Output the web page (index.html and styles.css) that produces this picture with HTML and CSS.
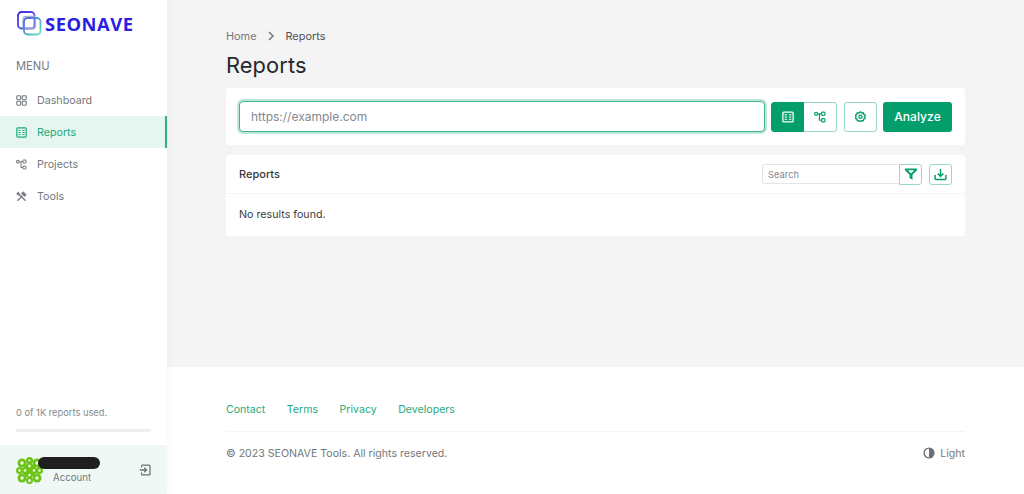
FILE: index.html
```html
<!DOCTYPE html>
<html lang="en">
<head>
<meta charset="utf-8">
<title>Reports - SEONAVE</title>
<link rel="stylesheet" href="styles.css">
</head>
<body>
<div class="app">
  <aside class="sidebar">
    <div class="logo">
      <svg class="logo-mark" width="25" height="25" viewBox="0 0 25 25" fill="none">
        <defs>
          <linearGradient id="lg1" x1="0" y1="0" x2="1" y2="1"><stop offset="0" stop-color="#3a22e6"/><stop offset="1" stop-color="#6f7ce8"/></linearGradient>
          <linearGradient id="lg2" x1="0" y1="0" x2="1" y2="1"><stop offset="0" stop-color="#4a5fe6"/><stop offset="1" stop-color="#63e6bd"/></linearGradient>
        </defs>
        <rect x="1" y="1" width="16.500" height="16.500" rx="3.500" stroke="url(#lg1)" stroke-width="1.800"/>
        <rect x="6" y="5.500" width="12.500" height="12.500" rx="3" stroke="#a9add0" stroke-width="1.300"/>
        <rect x="7" y="7" width="16.500" height="16.500" rx="3.500" stroke="url(#lg2)" stroke-width="1.800"/>
      </svg>
      <span class="logo-text">SEONAVE</span>
    </div>
    <div class="menu-title">MENU</div>
    <nav class="menu">
      <a class="menu-item">
        <svg class="mi" viewBox="0 0 14 14" fill="none" stroke="currentColor" stroke-width="1.400"><rect x="1" y="1" width="5" height="5" rx="1.200"/><rect x="8" y="1" width="5" height="5" rx="1.200"/><rect x="1" y="8" width="5" height="5" rx="1.200"/><rect x="8" y="8" width="5" height="5" rx="1.200"/></svg>
        Dashboard
      </a>
      <a class="menu-item active">
        <svg class="mi" viewBox="0 0 14 14" fill="none" stroke="currentColor" stroke-width="1.500"><rect x="1" y="1.200" width="12" height="11.600" rx="1.200"/><path d="M3 4.400h3M3 7h3M3 9.600h3M8 4.400h3M8 7h3M8 9.600h3" stroke-width="1.200"/></svg>
        Reports
      </a>
      <a class="menu-item">
        <svg class="mi" viewBox="0 0 14 14" fill="none" stroke="currentColor" stroke-width="1.300"><circle cx="2.400" cy="3.400" r="1.700"/><rect x="8.800" y="1.200" width="4" height="3.800" rx="1.200"/><rect x="8.800" y="9" width="4" height="3.800" rx="1.500"/><path d="M4.100 3.400h4.700M6.400 3.400v7.400h2.400"/></svg>
        Projects
      </a>
      <a class="menu-item">
        <svg class="mi" viewBox="0 0 14 14" fill="none" stroke="currentColor" stroke-width="1.600"><path d="M1.800 12.400l6.400-6.400"/><path d="M6.800 3l2.400-2 4 3.800-2.200 2.200z" fill="currentColor" stroke-width=".8"/><path d="M12.300 12.400L4.800 5"/><path d="M.8 3.100a3 3 0 0 0 4.200 2.200l-.5-2L2.900 1.300z" fill="currentColor" stroke-width=".6"/></svg>
        Tools
      </a>
    </nav>
    <div class="usage">
      <div class="usage-text">0 of 1K reports used.</div>
      <div class="usage-bar"></div>
    </div>
    <div class="account">
      <svg class="avatar" width="27" height="27" viewBox="0 0 27 27">
        <g fill="#6cc417">
          <circle cx="13.500" cy="3.500" r="3.500"/><circle cx="13.500" cy="23.500" r="3.500"/><circle cx="3.500" cy="13.500" r="3.500"/><circle cx="23.500" cy="13.500" r="3.500"/>
          <circle cx="6" cy="6" r="4.500"/><circle cx="21" cy="6" r="4.500"/><circle cx="6" cy="21" r="4.500"/><circle cx="21" cy="21" r="4.500"/>
          <rect x="7" y="7" width="13" height="13" transform="rotate(45 13.500 13.500)"/>
        </g>
        <g fill="#f1f9e8">
          <circle cx="6" cy="6" r="1.700"/><circle cx="21" cy="6" r="1.700"/><circle cx="6" cy="21" r="1.700"/><circle cx="21" cy="21" r="1.700"/>
          <circle cx="13.500" cy="3.500" r="1.100"/><circle cx="13.500" cy="23.500" r="1.500"/><circle cx="3.500" cy="13.500" r="1.200"/><circle cx="23.500" cy="13.500" r="1.200"/>
          <circle cx="9" cy="13.500" r="1.300"/><circle cx="18" cy="13.500" r="1.300"/><circle cx="13.500" cy="9" r="1.300"/><circle cx="13.500" cy="18" r="1.300"/>
        </g>
      </svg>
      <div class="account-info">
        <div class="redacted"></div>
        <div class="account-label">Account</div>
      </div>
      <svg class="logout" width="12" height="12" viewBox="0 0 14 14" fill="none" stroke="#6b7075" stroke-width="1.500"><path d="M3 4V2.200a1 1 0 0 1 1-1h7.800a1 1 0 0 1 1 1v9.600a1 1 0 0 1-1 1H4a1 1 0 0 1-1-1V10"/><path d="M.8 7h7.700M6.200 4.400L8.800 7l-2.600 2.600"/></svg>
    </div>
  </aside>
  <div class="main">
    <main class="content">
      <div class="breadcrumb">
        <span class="crumb">Home</span>
        <svg class="crumb-sep" width="8" height="10" viewBox="0 0 8 10" fill="none" stroke="#6c7075" stroke-width="1.400"><path d="M2 1l4 4-4 4"/></svg>
        <span class="crumb-current">Reports</span>
      </div>
      <h1 class="title">Reports</h1>
      <section class="card analyze">
        <input class="url" type="text" placeholder="https://example.com">
        <div class="btn-group">
          <button class="icon-btn selected" type="button">
            <svg width="12" height="12" viewBox="0 0 14 14" fill="none" stroke="currentColor" stroke-width="1.500"><rect x="1" y="1.200" width="12" height="11.600" rx="1.200"/><path d="M3 4.400h3M3 7h3M3 9.600h3M8 4.400h3M8 7h3M8 9.600h3" stroke-width="1.200"/></svg>
          </button>
          <button class="icon-btn" type="button">
            <svg width="12" height="12" viewBox="0 0 14 14" fill="none" stroke="currentColor" stroke-width="1.400"><circle cx="2.400" cy="3.400" r="1.700"/><rect x="8.800" y="1.200" width="4" height="3.800" rx="1.200"/><rect x="8.800" y="9" width="4" height="3.800" rx="1.500"/><path d="M4.100 3.400h4.700M6.400 3.400v7.400h2.400"/></svg>
          </button>
        </div>
        <button class="icon-btn solo" type="button">
          <svg width="11" height="11" viewBox="0 0 14 14" fill="none" stroke="currentColor" stroke-width="1.700"><path d="M7 1l1.500 1.600 2.200-.3.500 2.100 2 1-1 2 .8 2-2 .9-.5 2.200-2.300-.2L7 13.800l-1.700-1.500-2.300.2-.5-2.200-2-.9.800-2-1-2 2-1 .5-2.100 2.200.3z"/><circle cx="7" cy="7.300" r="2"/></svg>
        </button>
        <button class="analyze-btn" type="button">Analyze</button>
      </section>
      <section class="card results">
        <div class="results-head">
          <div class="results-title">Reports</div>
          <div class="tools">
            <input class="search" type="text" placeholder="Search">
            <button class="tool-btn joined" type="button">
              <svg width="12" height="12" viewBox="0 0 12 12" fill="#049e6c"><path d="M0 .5h12v1.700L7.500 6.800v5L4.500 10V6.800L0 2.200zM2.800 2.200L6 5.400l3.200-3.200z" fill-rule="evenodd"/></svg>
            </button>
            <button class="tool-btn" type="button">
              <svg width="13" height="13" viewBox="0 0 14 14" fill="none" stroke="#049e6c" stroke-width="1.600"><path d="M1.200 7.500v3.800a1 1 0 0 0 1 1h9.600a1 1 0 0 0 1-1V7.500"/><path d="M7 1v7.500M4 6l3 3 3-3"/></svg>
            </button>
          </div>
        </div>
        <div class="results-body">No results found.</div>
      </section>
    </main>
    <footer class="footer">
      <nav class="footer-links">
        <a>Contact</a><a>Terms</a><a>Privacy</a><a>Developers</a>
      </nav>
      <div class="footer-bottom">
        <span class="copy">© 2023 SEONAVE Tools. All rights reserved.</span>
        <span class="theme">
          <svg width="12" height="12" viewBox="0 0 12 12"><circle cx="6" cy="6" r="4.900" fill="none" stroke="#6c7075" stroke-width="1.400"/><path d="M6 1a5 5 0 0 1 0 10z" fill="#6c7075"/></svg>
          Light
        </span>
      </div>
    </footer>
  </div>
</div>
</body>
</html>
```
FILE: styles.css
```css
* { box-sizing: border-box; }
html, body { margin: 0; height: 100%; }
body { font-family: Inter, "Liberation Sans", sans-serif; background: #fff; color: #24282c; overflow: hidden; }
.app { display: flex; height: 494px; }

.sidebar { width: 167px; flex: none; display: flex; flex-direction: column; background: #fff; position: relative; z-index: 1; box-shadow: 0 0 10px rgba(0,0,0,.05); }
.logo { display: flex; align-items: center; height: 46px; padding: 0 0 0 17px; }
.logo-mark { flex: none; }
.logo-text { font-family: "Open Sans", sans-serif; font-weight: 700; font-size: 18.400px; color: #2a1fe0; letter-spacing: .5px; margin-left: 3px; }
.menu-title { font-size: 11.200px; color: #767a7f; padding: 13px 16px 0; height: 38px; }
.menu { display: flex; flex-direction: column; }
.menu-item { display: flex; align-items: center; gap: 10px; height: 32px; padding-left: 16px; font-size: 10.700px; color: #74787d; border-right: 2px solid transparent; }
.menu-item.active { background: #e5f5ef; color: #1fa97c; border-right-color: #2fae85; }
.mi { width: 11px; height: 11px; flex: none; }
.usage { margin-top: auto; padding: 0 16px; height: 39px; }
.usage-text { font-size: 9.300px; color: #85898e; line-height: 14px; }
.usage-bar { height: 3px; border-radius: 2px; background: #eeeeee; margin-top: 9px; }
.account { display: flex; align-items: center; height: 49px; padding: 0 16px; background: #eff8f5; }
.avatar { flex: none; margin-top: 2px; }
.account-info { flex: 1; display: flex; flex-direction: column; align-items: flex-start; padding-top: 2px; }
.redacted { width: 62px; height: 12px; border-radius: 6px; background: #1f1f1f; margin-left: -5px; }
.account-label { font-size: 9.700px; color: #74787d; margin: 3px 0 0 10px; line-height: 12px; }
.logout { flex: none; margin-top: 1px; }

.main { flex: 1; min-width: 0; display: flex; flex-direction: column; }
.content { height: 367px; background: #f4f4f4; padding: 29px 59px 0; }
.breadcrumb { display: flex; align-items: center; height: 14px; font-size: 10.900px; }
.crumb { color: #74787d; }
.crumb-sep { margin: 0 11px 0 10px; }
.crumb-current { color: #4c5055; }
.title { font-size: 21.800px; font-weight: 400; line-height: 27px; margin: 9px 0 9px; color: #24282c; letter-spacing: .1px; }
.card { background: #fff; border-radius: 3px; }
.analyze { display: flex; align-items: center; height: 57px; padding: 0 13px; }
.url { flex: 1; min-width: 0; height: 31px; border: 1px solid #3fb48d; border-radius: 4px; box-shadow: 0 0 0 2px #bfe7d9; padding: 0 11px; font: 12px Inter, sans-serif; color: #24282c; outline: none; margin-right: 6px; }
.url::placeholder { color: #85898e; opacity: 1; }
.btn-group { display: flex; }
.icon-btn { width: 33px; height: 30px; padding: 0; background: #fff; border: 1px solid #9ad8c3; color: #049e6c; display: flex; align-items: center; justify-content: center; }
.btn-group .icon-btn:first-child { border-radius: 3px 0 0 3px; }
.btn-group .icon-btn:last-child { border-radius: 0 3px 3px 0; border-left: 0; }
.icon-btn.selected { background: #049e6c; border-color: #049e6c; color: #fff; }
.icon-btn.solo { border-radius: 3px; margin-left: 7px; }
.analyze-btn { margin-left: 6px; width: 69px; height: 30px; background: #049e6c; border: 0; border-radius: 3px; color: #fff; font: 500 12.100px Inter, sans-serif; padding: 0; }
.results { margin-top: 10px; height: 81px; }
.results-head { display: flex; align-items: center; justify-content: space-between; height: 39px; padding: 0 13px; border-bottom: 1px solid #f4f4f4; }
.results-title { font-size: 11px; font-weight: 500; color: #34383c; }
.tools { display: flex; align-items: center; }
.search { width: 137px; height: 20px; border: 1px solid #e4e4e4; border-right: 0; border-radius: 3px 0 0 3px; padding: 0 5px; font: 9.400px Inter, sans-serif; outline: none; }
.search::placeholder { color: #85898e; opacity: 1; }
.tool-btn { width: 23px; height: 21px; padding: 0; background: #fff; border: 1px solid #9ad8c3; border-radius: 3px; display: flex; align-items: center; justify-content: center; }
.tool-btn.joined { margin-right: 7px; border-radius: 0 3px 3px 0; }
.results-body { padding: 14px 13px; font-size: 10.700px; line-height: 14px; color: #3c4044; }

.footer { flex: 1; background: #fff; padding: 36px 59px 0; }
.footer-links { display: flex; gap: 21.500px; height: 29px; border-bottom: 1px solid #f4f4f4; font-size: 10.600px; line-height: 14px; color: #2aa97c; }
.footer-bottom { display: flex; align-items: center; justify-content: space-between; height: 42px; font-size: 10.600px; color: #74787d; }
.theme { display: flex; align-items: center; gap: 5px; }
```
